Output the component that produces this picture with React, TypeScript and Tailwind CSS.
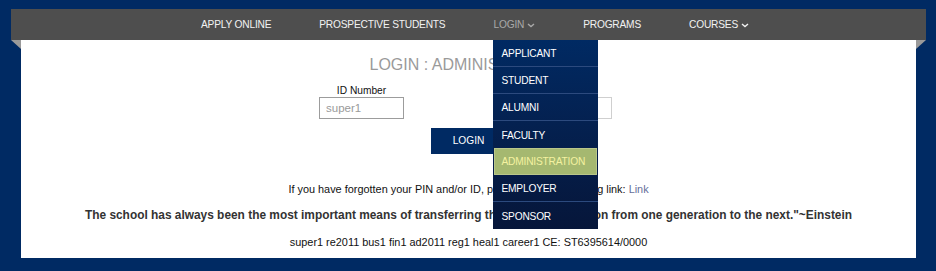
import React from "react";

const Chevron = () => (
  <svg width="8" height="6" viewBox="0 0 8 6" className="ml-[3px] inline-block">
    <path d="M1 2 L4 4.5 L7 2" fill="none" stroke="currentColor" strokeWidth="1.4" />
  </svg>
);

const menu = ["APPLICANT", "STUDENT", "ALUMNI", "FACULTY", "ADMINISTRATION", "EMPLOYER", "SPONSOR"];

export default function App() {
  return (
    <div
      className="h-[271px] w-[936px] overflow-hidden bg-[#002a63] pt-[9px] px-[10px]"
      style={{ fontFamily: '"Liberation Sans", Arial, sans-serif' }}
    >
      <nav className="relative z-10 ml-[1px] flex h-[31px] w-[915px] items-center bg-[#4e4e4e] pl-[166px] text-[10.2px] tracking-[-0.2px] text-[#f2f2f2]">
        <div className="px-6 pt-[1px]">APPLY ONLINE</div>
        <div className="px-6 pt-[1px]">PROSPECTIVE STUDENTS</div>
        <div className="relative flex h-full items-center px-6 pt-[1px] text-[#a9a9a9]">
          <span>LOGIN</span>
          <Chevron />
          <ul className="absolute left-6 top-full w-[105px] bg-gradient-to-b from-[#002a63] to-[#06163a]">
            {menu.map((m, i) => (
              <li
                key={m}
                className={
                  m === "ADMINISTRATION"
                    ? "mx-[1px] flex h-[27px] items-center border border-[#b9c68a] bg-[#a5b870] pl-[6px] pt-[1px] text-[#f4f2a0]"
                    : "flex h-[27px] items-center pl-[8px] pt-[2px] text-white " +
                      (i < menu.length - 1 && menu[i + 1] !== "ADMINISTRATION" ? "border-b border-[#2c4a7e]" : "")
                }
              >
                {m}
              </li>
            ))}
          </ul>
        </div>
        <div className="px-6 pt-[1px]">PROGRAMS</div>
        <div className="flex items-center px-6 pt-[1px]">
          <span>COURSES</span>
          <Chevron />
        </div>
      </nav>
      <div className="flex">
        <div className="w-[11px] pl-[1px]">
          <svg width="10" height="9" viewBox="0 0 10 9" className="block">
            <path d="M0 0 H10 V9 Z" fill="#9a9a9a" />
          </svg>
        </div>
        <div className="flex h-[218px] w-[895px] flex-col items-center bg-white text-[10.9px] text-[#111]">
          <div className="mt-[16px] h-[18px] text-[16px] leading-[18px] text-[#9a9a9a]">LOGIN : ADMINISTRATION</div>
          <div className="mr-[6px] mt-[10px] flex gap-[123px]">
            <div className="flex flex-col items-center">
              <label className="h-[13px] text-[10.2px] leading-[14px]">ID Number</label>
              <input
                readOnly
                value="super1"
                className="h-[22px] w-[85px] border border-[#9c9c9c] px-[6px] text-[11.5px] text-[#9a9a9a] outline-none"
              />
            </div>
            <div className="flex flex-col items-center">
              <label className="h-[13px] text-[10.2px] leading-[14px] text-[#2a5caa]">PIN Number</label>
              <input
                readOnly
                type="password"
                className="h-[22px] w-[85px] border border-[#cfcfcf] px-[6px] text-[12px] outline-none"
              />
            </div>
          </div>
          <button className="mt-[9px] h-[26px] w-[75px] bg-[#002a63] text-[10.2px] text-white">LOGIN</button>
          <p className="mt-[28px] leading-[14px]">
            If you have forgotten your PIN and/or ID, please use the following link:{" "}
            <span className="text-[#66709a]">Link</span>
          </p>
          <p className="mt-[12px] text-[11.9px] font-bold leading-[14px] text-[#333]">
            The school has always been the most important means of transferring the wealth of tradition from one generation to the next."~Einstein
          </p>
          <p className="mt-[13px] leading-[14px]">super1 re2011 bus1 fin1 ad2011 reg1 heal1 career1 CE: ST6395614/0000</p>
        </div>
        <div className="w-[10px]">
          <svg width="10" height="9" viewBox="0 0 10 9" className="block">
            <path d="M0 0 H10 L0 9 Z" fill="#9a9a9a" />
          </svg>
        </div>
      </div>
    </div>
  );
}
